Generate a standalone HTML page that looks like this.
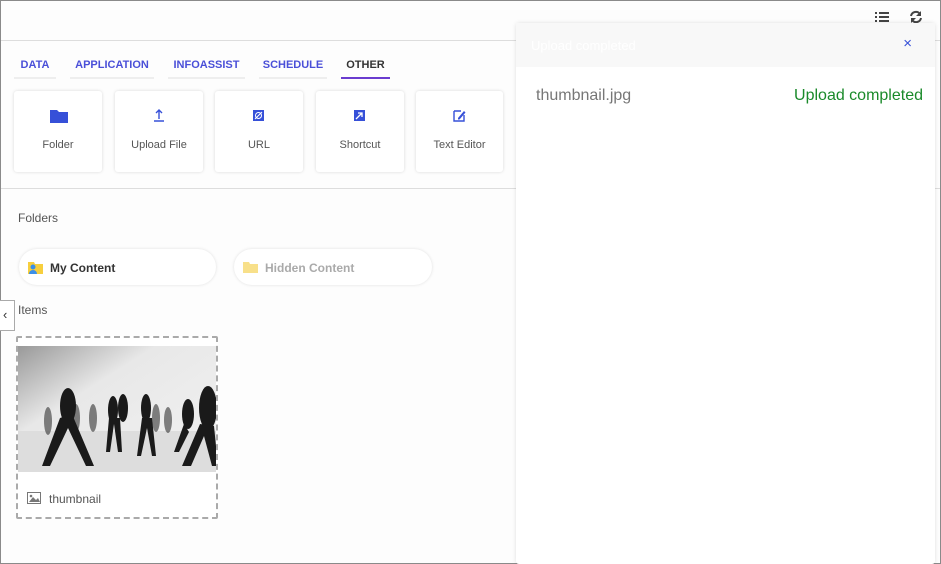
<!DOCTYPE html>
<html><head><style>
*{box-sizing:border-box;margin:0;padding:0}
body{width:941px;height:564px;overflow:hidden;font-family:"Liberation Sans",sans-serif;background:#fff;position:relative}
.frame{position:absolute;inset:0;border:1px solid #8a8a8a;background:#fdfdfd}
.hline{position:absolute;left:1px;right:1px;height:1px;background:#ddd}
.tab{position:absolute;top:59px;font-size:11px;font-weight:bold;color:#4a4fd8;height:20px;border-bottom:2px solid #eee}
.card{position:absolute;top:91px;width:88px;height:81px;background:#fff;border-radius:3px;box-shadow:0 0 3px rgba(0,0,0,.15);text-align:center;font-size:11px;color:#555}
.card svg{position:absolute;left:36px;top:17px}
.card span{position:absolute;left:0;right:0;top:48px}
.pill{position:absolute;top:249px;height:36px;border-radius:18px;background:#fff;box-shadow:0 0 3px rgba(0,0,0,.12);font-size:12px;font-weight:bold}
</style></head><body>
<div class="frame"></div>
<div class="hline" style="top:40px"></div>
<div class="hline" style="top:188px"></div>
<div class="tab" style="left:14px;width:42px;text-align:center">DATA</div>
<div class="tab" style="left:70px;width:84px;text-align:center">APPLICATION</div>
<div class="tab" style="left:168px;width:77px;text-align:center">INFOASSIST</div>
<div class="tab" style="left:259px;width:68px;text-align:center">SCHEDULE</div>
<div class="tab" style="left:341px;width:49px;text-align:center;color:#333;border-bottom:2px solid #6a3ccf">OTHER</div>
<div class="card" style="left:14px"><svg width="18" height="16"><path d="M0 2h7l2 2h9v11H0z" fill="#3650d8"/></svg><span>Folder</span></div>
<div class="card" style="left:115px"><svg width="16" height="16"><path d="M8 2v9M5 5l3-3 3 3M3 13h10" stroke="#3650d8" stroke-width="1.4" fill="none"/></svg><span>Upload File</span></div>
<div class="card" style="left:215px"><svg width="16" height="16"><rect x="2" y="2" width="11" height="11" fill="#3650d8"/><circle cx="7.5" cy="7.5" r="3" stroke="#fff" fill="none"/><path d="M4 11l7-7" stroke="#fff"/></svg><span>URL</span></div>
<div class="card" style="left:316px"><svg width="16" height="16"><rect x="2" y="2" width="11" height="11" fill="#3650d8"/><path d="M4 11l6-6M6 5h4v4" stroke="#fff" stroke-width="1.3" fill="none"/></svg><span>Shortcut</span></div>
<div class="card" style="left:416px;width:87px"><svg width="16" height="16"><path d="M2 3h7M2 3v10h10V7" stroke="#3650d8" stroke-width="1.4" fill="none"/><path d="M6 10l6-7 1.5 1.5-6 7H6z" fill="#3650d8"/></svg><span>Text Editor</span></div>
<div style="position:absolute;left:18px;top:211px;font-size:12px;color:#555">Folders</div>
<div class="pill" style="left:19px;width:197px"><svg style="position:absolute;left:9px;top:12px" width="15" height="13"><path d="M0 1h6l1 2h8v10H0z" fill="#f7cf3e"/><circle cx="5" cy="6" r="2.5" fill="#3b8fe8"/><path d="M1 13a4 4 0 0 1 8 0z" fill="#3b8fe8"/></svg><span style="position:absolute;left:31px;top:12px;color:#333">My Content</span></div>
<div class="pill" style="left:234px;width:198px"><svg style="position:absolute;left:9px;top:12px" width="15" height="12"><path d="M0 1h6l1 2h8v9H0z" fill="#f8e08a"/></svg><span style="position:absolute;left:31px;top:12px;color:#aaa">Hidden Content</span></div>
<div style="position:absolute;left:0;top:300px;width:15px;height:31px;border:1px solid #aaa;border-left:none;background:#fff;font-size:13px;color:#333;padding:6px 0 0 3px">&#8249;</div>
<div style="position:absolute;left:18px;top:303px;font-size:12px;color:#555">Items</div>
<div style="position:absolute;left:16px;top:336px;width:202px;height:183px;border:2px dashed #aaa;border-radius:2px;background:#fff"></div>
<svg style="position:absolute;left:18px;top:346px" width="198" height="126">
<defs><linearGradient id="g" x1="0" y1="0" x2="1" y2="1"><stop offset="0" stop-color="#999"/><stop offset=".35" stop-color="#e8e8e8"/><stop offset="1" stop-color="#f2f2f2"/></linearGradient></defs>
<rect width="198" height="126" fill="url(#g)"/>
<rect y="85" width="198" height="41" fill="#ddd"/>
<g fill="#333" opacity=".6">
<ellipse cx="30" cy="75" rx="4" ry="14"/><ellipse cx="75" cy="72" rx="4" ry="14"/><ellipse cx="138" cy="72" rx="4" ry="14"/><ellipse cx="58" cy="72" rx="4" ry="14"/><ellipse cx="150" cy="74" rx="4" ry="13"/>
</g>
<g fill="#1a1a1a">
<ellipse cx="50" cy="60" rx="8" ry="18"/><path d="M42 72l-18 48h8l18-38 18 38h8l-22-52z"/>
<ellipse cx="128" cy="62" rx="5" ry="14"/><path d="M124 72l-5 38h4l6-28 5 28h4l-4-38z"/>
<ellipse cx="190" cy="62" rx="9" ry="22"/><path d="M182 78l-18 42h9l13-30 8 30h6l-4-40z"/>
<ellipse cx="170" cy="68" rx="6" ry="15"/><path d="M166 78l-10 28h5l10-20z"/>
<ellipse cx="95" cy="64" rx="5" ry="14"/><ellipse cx="105" cy="62" rx="5" ry="14"/><path d="M91 72l-3 34h4l4-28 4 28h4l-2-34z"/>
</g></svg>
<svg style="position:absolute;left:27px;top:492px" width="14" height="12"><rect x=".5" y=".5" width="13" height="11" fill="none" stroke="#777"/><path d="M2 10l4-5 3 3 2-2 2 4z" fill="#777"/><circle cx="4" cy="4" r="1.3" fill="#777"/></svg>
<div style="position:absolute;left:49px;top:492px;font-size:12px;color:#555">thumbnail</div>
<svg style="position:absolute;left:875px;top:11px" width="14" height="12"><g fill="#444"><rect x="0" y="1" width="2" height="2"/><rect x="0" y="5" width="2" height="2"/><rect x="0" y="9" width="2" height="2"/><rect x="4" y="1" width="10" height="2"/><rect x="4" y="5" width="10" height="2"/><rect x="4" y="9" width="10" height="2"/></g></svg>
<svg style="position:absolute;left:909px;top:10px" width="14" height="14"><path d="M2 6a5 5 0 0 1 9-2M12 8a5 5 0 0 1-9 2" stroke="#444" stroke-width="2" fill="none"/><path d="M12 1v5H7zM2 13V8h5z" fill="#444"/></svg>
<div style="position:absolute;left:516px;top:23px;width:419px;height:541px;background:#fff;box-shadow:0 0 4px rgba(0,0,0,.12);border-radius:3px">
<div style="height:44px;background:#f8f8f8;color:#fff;font-size:13px;padding:15px 0 0 15px">Upload completed<span style="position:absolute;right:23px;top:12px;color:#3650d8;font-size:15px">×</span></div>
<div style="position:absolute;left:20px;top:64px;font-size:16px;color:#777">thumbnail.jpg</div>
<div style="position:absolute;right:12px;top:64px;font-size:16px;color:#1a8a2a">Upload completed</div>
</div>
</body></html>
